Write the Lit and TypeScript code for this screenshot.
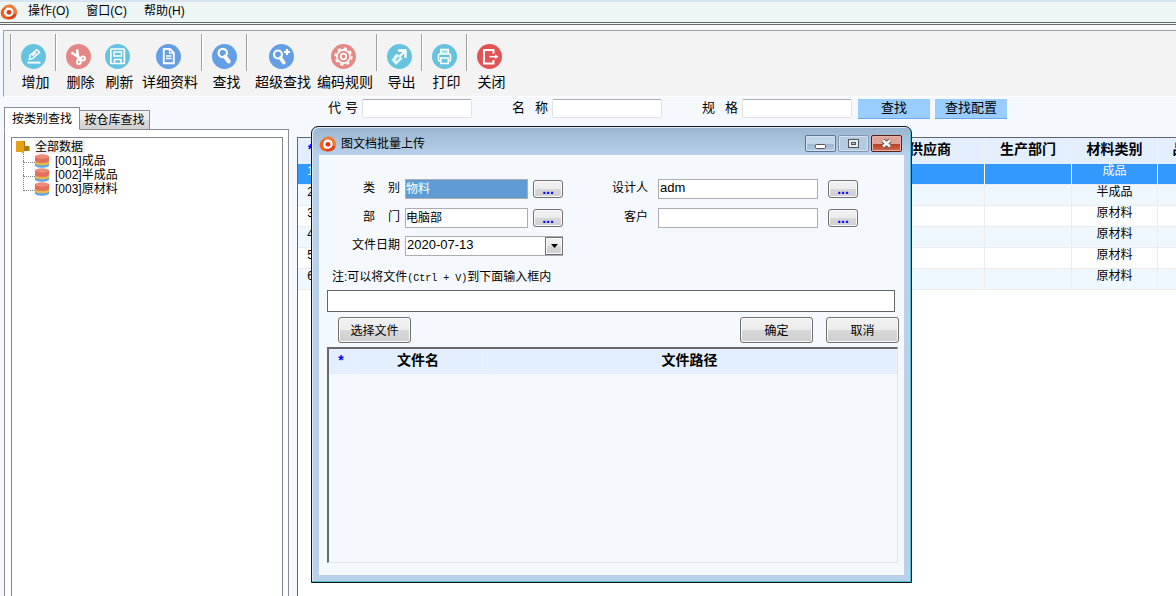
import { LitElement, html, css, svg, type TemplateResult } from "lit";
import { customElement, state } from "lit/decorators.js";

const logo = html`<svg class="logo" width="18" height="16" viewBox="0 0 18 16" aria-hidden="true">
  <circle cx="9" cy="8" r="5.500" fill="#fff"/>
  <path d="M3.600 3.200C6 .2 11 -.5 13.600 2C16.500 4 17.800 7.500 16.600 10.800L13.400 10C14.200 6 12 3.800 9 3.600C7 3.500 5.500 4.200 4.600 5.400Z" fill="#f27a35"/>
  <path d="M3.600 3.400C.6 5 .2 9.500 1.200 11.300C2 13.800 4.500 15.200 7 15.300L8.400 12.900C5 12.600 3.400 10 4.200 7C4.500 5.500 5.500 4.500 6.500 4Z" fill="#f2611c"/>
  <path d="M16.600 10.400C15.500 14.500 11.500 16.300 6.800 15.300L7.500 12.700C10.500 13.200 12.800 12 13.600 9.600Z" fill="#dc4316"/>
  <circle cx="9" cy="8.300" r="2.400" fill="#e8341a"/>
</svg>`;

const glyphs: Record<string, TemplateResult> = {
  edit: svg`<path d="M6.500 18.600h13" stroke-width="1.900"/><path d="M8.300 15.200l.7-3.700 6.800-5.800 2.700 2.500-6.600 6.200z M14.800 8.600l-3.400 3"/>`,
  cut: svg`<path d="M5.500 8.500l9 6M11 5.500l1.500 10" stroke-width="2.600"/><circle cx="17" cy="14.500" r="2" stroke-width="2"/><circle cx="12.800" cy="18" r="2" stroke-width="2"/>`,
  save: svg`<rect x="5.800" y="5" width="13.600" height="14.500" rx="1" stroke-width="1.700"/><rect x="9" y="8" width="7.500" height="4"/><path d="M9.500 19v-3.500h6.500V19"/>`,
  doc: svg`<path d="M7.800 5h6.200l3.800 3.800v10.400h-10z" stroke-width="1.900"/><path d="M13.500 5.500v3.700h4M10 12h5.500M10 14.500h5.500" stroke-width="1.300"/>`,
  find: svg`<circle cx="10.800" cy="9" r="4.200" stroke-width="2.200"/><path d="M13 12.500l3.700 5" stroke-width="4" stroke-linecap="round"/>`,
  findPlus: svg`<circle cx="9" cy="10.500" r="4" stroke-width="2.200"/><path d="M11.500 14l3.200 4.500" stroke-width="3.800" stroke-linecap="round"/><path d="M18 5v6M15 8h6" stroke-width="2.200"/>`,
  gear: svg`<circle cx="12.500" cy="12.500" r="6.600" stroke-width="1.700"/><circle cx="12.500" cy="12.500" r="8.200" stroke-width="1.900" stroke-dasharray="3.220 3.220"/><circle cx="12.500" cy="12.500" r="2.800" stroke-width="1.800"/>`,
  send: svg`<path d="M11 6.500h7.500V14M17.500 7.500L12 13" stroke-width="2.400"/><path d="M5.500 16l4-5.500 5 4-5.500 5.500z" fill="#e6f7fb" stroke="#e6f7fb"/><path d="M9 16.500l3-3.500" stroke="#66c3df"/>`,
  print: svg`<path d="M8.800 10V5.500h7.500V10" fill="#a9dff0"/><rect x="6.500" y="10" width="12" height="7" rx="1"/><path d="M8.800 14h7.500v5.500H8.800z" fill="#66c3df"/>`,
  exit: svg`<path d="M16.500 9.500V6H7v13.500h9.500V16" stroke-width="2"/><path d="M12.500 12.700h7" stroke-width="1.500"/><path d="M18 10.200l3.500 2.500-3.500 2.500z" fill="#fff" stroke="none"/>`,
};

interface Tool { label: string; icon: string; color: string; wide?: boolean }
const toolGroups: Tool[][] = [
  [{ label: "增加", icon: "edit", color: "#66c3df" }],
  [
    { label: "删除", icon: "cut", color: "#e58885" },
    { label: "刷新", icon: "save", color: "#66c3df" },
    { label: "详细资料", icon: "doc", color: "#649fe6", wide: true },
  ],
  [{ label: "查找", icon: "find", color: "#649fe6" }],
  [
    { label: "超级查找", icon: "findPlus", color: "#649fe6", wide: true },
    { label: "编码规则", icon: "gear", color: "#e58885", wide: true },
  ],
  [{ label: "导出", icon: "send", color: "#66c3df" }],
  [{ label: "打印", icon: "print", color: "#66c3df" }],
  [{ label: "关闭", icon: "exit", color: "#e25454" }],
];

const shared = css`
  :host, button, input, select {
    font-family: "Liberation Sans", "Noto Sans CJK SC", sans-serif;
    font-size: 12px;
    color: #000;
  }
  * { box-sizing: border-box; }
  button, input, select { margin: 0; }
  .push {
    border: 1px solid #707070;
    border-radius: 3px;
    background: linear-gradient(#f2f2f2 0, #ebebeb 48%, #d8d8d8 50%, #cfcfcf 100%);
    box-shadow: inset 0 0 0 1px #fafafa;
    padding: 0;
  }
  .spread { text-align: justify; text-align-last: justify; }
`;

@customElement("tool-bar")
export class ToolBar extends LitElement {
  static styles = [shared, css`
    :host {
      display: flex;
      height: 67px;
      margin: 5px 0 0 3px;
      padding: 3px 0 0 6px;
      background: #f3f3f3;
      border-top: 1px solid #a0a0a0;
      border-left: 1px solid #a0a0a0;
      border-bottom: 1px solid #fff;
    }
    .group { display: flex; padding: 0 2px 0 4px; position: relative; }
    .group::before {
      content: "";
      position: absolute;
      left: 0;
      top: 0;
      width: 2px;
      height: 37px;
      background: linear-gradient(90deg, #a0a0a0 50%, #fff 50%);
    }
    .tool {
      display: flex;
      flex-direction: column;
      align-items: center;
      gap: 4px;
      width: 39px;
      padding: 10px 0 0;
      border: 0;
      background: none;
      font-size: 14px;
      line-height: 18px;
      white-space: nowrap;
    }
    .wide { width: 62px; }
    .icon { display: block; flex: none; }
    .caption { padding-left: 4px; }
  `];
  render() {
    return html`${toolGroups.map((g) => html`<div class="group">${g.map((t) => html`
      <button type="button" class="tool ${t.wide ? "wide" : ""}">
        <svg class="icon" width="25" height="25" viewBox="0 0 25 25" fill="none" stroke="#fff" stroke-width="1.500">
          <circle cx="12.500" cy="12.500" r="12.500" fill=${t.color} stroke="none"/>${glyphs[t.icon]}
        </svg>
        <span class="caption">${t.label}</span>
      </button>`)}</div>`)}`;
  }
}

@customElement("category-panel")
export class CategoryPanel extends LitElement {
  static styles = [shared, css`
    :host { display: flex; flex-direction: column; padding: 10px 0 0 4px; min-height: 0; }
    .tabs { display: flex; align-items: flex-end; z-index: 1; }
    .tab {
      height: 20px;
      width: 70px;
      padding: 0;
      border: 1px solid #898c95;
      border-left-width: 0;
      background: linear-gradient(#f2f2f2, #ebebeb 50%, #dcdcdc 50%, #cfcfcf);
      line-height: 18px;
      white-space: nowrap;
    }
    .tab.on { width: 76px; height: 23px; border-left-width: 1px; border-bottom-color: #fff; background: #fff; }
    .sheet {
      flex: 1;
      padding: 7px 5px 0 6px;
      border: 1px solid #898c95;
      border-bottom: 0;
      background: #fff;
      min-height: 0;
      margin-top: -1px;
      display: flex;
    }
    .tree {
      flex: 1;
      margin: 0;
      padding: 2px 0 0 4px;
      border: 1px solid #828790;
      border-bottom: 0;
      list-style: none;
      line-height: 14px;
    }
    .row { display: flex; align-items: center; height: 14px; gap: 5px; }
    .root { background: #f0f0f0; padding-right: 2px; }
    .kids { list-style: none; margin: 0 0 0 7px; padding: 0; }
    .kid { position: relative; padding-left: 12px; gap: 6px; }
    .kid::before {
      content: "";
      position: absolute;
      left: 0;
      top: 0;
      width: 11px;
      height: 8px;
      border-left: 1px dotted #808080;
      border-bottom: 1px dotted #808080;
    }
    .kid + .kid::before { top: -7px; height: 15px; }
    .glyph { flex: none; }
  `];
  @state() private tab = 0;
  render() {
    return html`
      <div class="tabs" role="tablist">
        ${["按类别查找", "按仓库查找"].map((t, i) => html`<button type="button" role="tab" aria-selected=${this.tab === i}
          class="tab ${this.tab === i ? "on" : ""}" @click=${() => (this.tab = i)}>${t}</button>`)}
      </div>
      <div class="sheet"><ul class="tree">
        <li>
          <div class="row"><svg class="glyph" width="14" height="14" viewBox="0 0 14 14">
            <path d="M7 1h2v5h4.500v5H8z" fill="#b07c00"/><path d="M0 1h7l1 2v11l-3-2H0z" fill="#e6a117"/></svg>
            <span class="root">全部数据</span></div>
          <ul class="kids">
            ${["[001]成品", "[002]半成品", "[003]原材料"].map((t) => html`<li class="kid row">
              <svg class="glyph" width="14" height="14" viewBox="0 0 14 14">
                <path d="M0 9v2.500c1 3 13 3 14 0V9z" fill="#5ea6e6"/>
                <path d="M0 6v3.500c1 2.500 13 2.500 14 0V6z" fill="#e8b84c"/>
                <path d="M0 2v5c1 2.500 13 2.500 14 0V2z" fill="#e3705c"/>
                <ellipse cx="7" cy="2.500" rx="7" ry="2.200" fill="#ee8c78"/></svg>
              <span>${t}</span></li>`)}
          </ul>
        </li>
      </ul></div>`;
  }
}

@customElement("material-list")
export class MaterialList extends LitElement {
  static styles = [shared, css`
    :host { display: flex; flex-direction: column; min-width: 0; min-height: 0; overflow: hidden; }
    .search { display: flex; padding: 2px 0 0 39px; height: 40px; align-items: flex-start; }
    .field { display: flex; gap: 4px; margin-right: 40px; }
    .name { width: 36px; line-height: 18px; font-size: 13px; }
    .short { width: 30px; }
    .box {
      width: 110px;
      height: 19px;
      border: 1px solid #e2e3ea;
      border-top-color: #abadb3;
      border-radius: 2px;
      background: #fff;
    }
    .last { margin-right: 6px; }
    .go {
      width: 72px;
      height: 20px;
      margin-right: 5px;
      padding: 0 0 1px;
      border: 0;
      border-bottom: 1px solid #6ca6f0;
      background: #99ccff;
      font-size: 13px;
      line-height: 18px;
    }
    .pane {
      flex: 1;
      margin-left: 8px;
      border-top: 1px solid #64666e;
      border-left: 1px solid #64666e;
      background: #fff;
      overflow: hidden;
    }
    table { border-collapse: separate; border-spacing: 0; table-layout: fixed; width: 904px; }
    th {
      height: 26px;
      padding: 0 0 4px;
      border-right: 1px solid #f0f0f0;
      background: #e3efff;
      font-size: 14px;
      line-height: 20px;
      white-space: nowrap;
    }
    td {
      height: 21px;
      padding: 0 0 5px;
      border-right: 1px solid #ececec;
      border-bottom: 1px solid #ececec;
      text-align: center;
      line-height: 15px;
    }
    tr:nth-child(even) td { background: #f0f8ff; }
    tr.sel td { background: #3399ff; color: #fff; border-right-color: #fff; }
    .star { color: #00f; }
    .c0 { width: 26px; }
    .c1 { width: 552px; }
    .c2 { width: 109px; }
    .c3 { width: 87px; }
    .c4 { width: 86px; }
    .c5 { width: 44px; }
  `];
  render() {
    const kinds = ["成品", "半成品", "原材料", "原材料", "原材料", "原材料"];
    return html`
      <form class="search" @submit=${(e: Event) => e.preventDefault()}>
        <div class="field"><label class="name short spread" for="code">代 号</label><input class="box" id="code"></div>
        <div class="field"><label class="name spread" for="title">名 称</label><input class="box" id="title"></div>
        <div class="field last"><label class="name spread" for="spec">规 格</label><input class="box" id="spec"></div>
        <button class="go">查找</button><button type="button" class="go">查找配置</button>
      </form>
      <div class="pane"><table>
        <colgroup><col class="c0"><col class="c1"><col class="c2"><col class="c3"><col class="c4"><col class="c5"></colgroup>
        <thead><tr><th class="star">*</th><th></th><th>供应商</th><th>生产部门</th><th>材料类别</th><th>品</th></tr></thead>
        <tbody>${kinds.map((k, i) => html`<tr class=${i === 0 ? "sel" : ""}>
          <td>${i + 1}</td><td></td><td></td><td></td><td>${k}</td><td></td></tr>`)}</tbody>
      </table></div>`;
  }
}

@customElement("upload-window")
export class UploadWindow extends LitElement {
  static styles = [shared, css`
    :host {
      display: flex;
      flex-direction: column;
      padding: 0 7px 7px;
      border: 1px solid #10181c;
      border-radius: 7px 7px 0 0;
      background: linear-gradient(#99b4cf 0, #b9d1ea 28px);
      box-shadow: inset -1px -1px 0 #4fbccb, inset 1px 1px 0 #dcebf7;
    }
    .bar { display: flex; align-items: center; height: 28px; padding: 6px 2px 1px 0; }
    .title { flex: 1; padding-left: 4px; line-height: 20px; }
    .caps { display: flex; gap: 2px; }
    .cap {
      display: grid;
      place-items: center;
      width: 31px;
      height: 17px;
      padding: 0;
      border: 1px solid #5d748c;
      border-radius: 2px;
      background: linear-gradient(#c3d5e8 50%, #9db6d0 50%, #b5cbe2);
      box-shadow: inset 0 0 0 1px #d4e2f0;
    }
    .dim { border-color: #8497ae; background: #b4cae1; }
    .close { border-color: #5a1d16; background: linear-gradient(#e0a399 50%, #b83b22 50%, #cf6a4f); box-shadow: inset 0 0 0 1px #e8b5ab; }
    .body { flex: 1; display: flex; flex-direction: column; padding: 19px 6px 12px 8px; background: #f5f9fd; min-height: 0; }
    .fields {
      display: grid;
      grid-template-columns: 73px 123px 30px 85px 165px 30px;
      grid-template-rows: 29px 29px 27px;
      column-gap: 5px;
      align-items: center;
    }
    .lab { justify-self: end; white-space: nowrap; line-height: 18px; padding-bottom: 2px; }
    .pair { width: 37px; }
    .far { padding-right: 5px; }
    .text {
      width: 100%;
      height: 20px;
      padding: 0 0 2px;
      border: 1px solid #abadb3;
      background: #fff;
    }
    .w160 { width: 160px; }
    .num { font-size: 13px; padding-left: 1px; }
    .hot { background: #5f9cd3; color: #fff; }
    .dots { width: 30px; height: 18px; color: #00f; font-weight: bold; font-size: 14px; line-height: 14px; }
    .date { grid-column: 2 / 4; display: grid; }
    .date > * { grid-area: 1 / 1; }
    .date .text { appearance: none; border-radius: 0; }
    .drop {
      justify-self: end;
      width: 18px;
      height: 18px;
      margin: 1px 0;
      pointer-events: none;
      border-radius: 0;
      display: grid;
      place-items: center;
    }
    .note { margin: 7px 0 0 5px; line-height: 22px; }
    .mono { font-family: "Liberation Mono", monospace; font-size: 10px; }
    .drop-box { height: 22px; margin-right: 3px; border: 1px solid #646464; background: #fff; flex: none; padding: 0 4px; }
    .actions { display: flex; gap: 13px; padding: 5px 0 4px 11px; margin-right: -1px; }
    .act { width: 73px; height: 26px; padding-bottom: 2px; }
    .first { margin-right: auto; }
    .files {
      flex: 1;
      border: 1px solid #e3e3e3;
      border-top: 2px solid #696969;
      border-left: 2px solid #696969;
      min-height: 0;
    }
    table { width: 100%; border-spacing: 0; table-layout: fixed; }
    th { height: 25px; padding: 0 0 4px; background: #e3efff; border-right: 1px solid #ebeff6; font-size: 14px; line-height: 20px; }
    .star { width: 25px; color: #00f; }
    .fname { width: 129px; }
  `];
  render() {
    const dots = (name: string) => html`<button type="button" class="push dots" aria-label=${name}>...</button>`;
    return html`
      <div class="bar">${logo}<span class="title">图文档批量上传</span>
        <div class="caps">
          <button type="button" class="cap" aria-label="最小化"><svg width="13" height="11" viewBox="0 0 13 11"><rect x="1.500" y="6.500" width="10" height="4" rx="1" fill="#fff" stroke="#555"/></svg></button>
          <button type="button" class="cap dim" aria-label="最大化"><svg width="11" height="9" viewBox="0 0 11 9"><rect x=".5" y=".5" width="10" height="8" fill="#e6edf5" stroke="#555"/><rect x="3.500" y="3.500" width="4" height="2" fill="#b4cae1" stroke="#555"/></svg></button>
          <button type="button" class="cap close" aria-label="关闭"><svg width="13" height="11" viewBox="0 0 13 11"><path d="M3 2.500l7 6M10 2.500l-7 6" stroke="#555" stroke-width="4.500"/><path d="M3 2.500l7 6M10 2.500l-7 6" stroke="#fff" stroke-width="2.600"/></svg></button>
        </div>
      </div>
      <div class="body">
        <div class="fields">
          <label class="lab pair spread" for="kind">类 别</label>
          <input class="text hot" id="kind" value="物料">${dots("选择类别")}
          <label class="lab far" for="designer">设计人</label>
          <input class="text w160 num" id="designer" value="adm">${dots("选择设计人")}
          <label class="lab pair spread" for="dept">部 门</label>
          <input class="text" id="dept" value="电脑部">${dots("选择部门")}
          <label class="lab far" for="client">客户</label>
          <input class="text w160" id="client">${dots("选择客户")}
          <label class="lab" for="date">文件日期</label>
          <div class="date">
            <select class="text num" id="date"><option>2020-07-13</option></select>
            <span class="push drop"><svg width="7" height="4" viewBox="0 0 7 4"><path d="M0 0h7L3.500 4z"/></svg></span>
          </div>
        </div>
        <label class="note" for="paste">注:可以将文件<span class="mono">(Ctrl + V)</span>到下面输入框内</label>
        <input class="drop-box" id="paste">
        <div class="actions">
          <button type="button" class="push act first">选择文件</button>
          <button type="button" class="push act">确定</button>
          <button type="button" class="push act">取消</button>
        </div>
        <div class="files"><table><thead><tr><th class="star">*</th><th class="fname">文件名</th><th>文件路径</th></tr></thead></table></div>
      </div>`;
  }
}

@customElement("app-root")
export class AppRoot extends LitElement {
  static styles = [shared, css`
    :host {
      display: flex;
      flex-direction: column;
      position: relative;
      height: 100vh;
      overflow: hidden;
      background: #f5f9fd;
    }
    .menu {
      display: flex;
      align-items: center;
      gap: 17px;
      height: 25px;
      border-top: 2px solid #d7e4f2;
      border-bottom: 3px double #696969;
      background: #eef6f5;
      flex: none;
    }
    .brand { display: flex; align-items: center; gap: 10px; }
    .item { border: 0; padding: 0 0 1px; background: none; line-height: 17px; }
    tool-bar { flex: none; }
    .work { flex: 1; display: grid; grid-template-columns: 289px minmax(0, 1fr); grid-template-rows: minmax(0, 1fr); min-height: 0; }
    .window { position: absolute; left: 311px; top: 126px; width: 601px; height: 457px; }
  `];
  render() {
    return html`
      <nav class="menu">
        <div class="brand">${logo}<button type="button" class="item">操作(O)</button></div>
        <button type="button" class="item">窗口(C)</button>
        <button type="button" class="item">帮助(H)</button>
      </nav>
      <tool-bar></tool-bar>
      <main class="work"><category-panel></category-panel><material-list></material-list></main>
      <upload-window class="window" role="dialog" aria-label="图文档批量上传"></upload-window>`;
  }
}
